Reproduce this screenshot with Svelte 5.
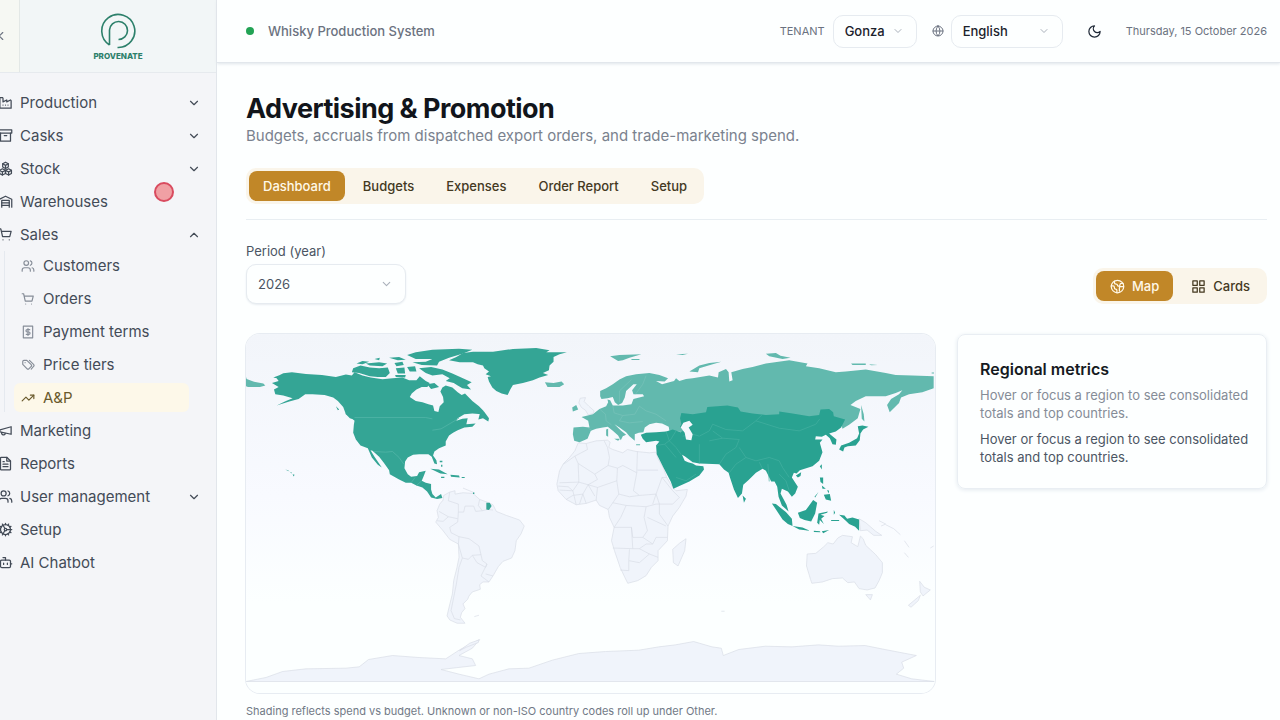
<script>
  const icons = {
    factory: ['M3 21V5l1-1h3l1 1v6l6-3v3l6-3 1 1v12Z', 'M8 16h.01M12 16h.01M16 16h.01'],
    archive: ['M2 3h20v5H2z', 'M4 8v13h16V8', 'M10 12h4'],
    boxes: [
      'M7 12.5 2.5 15v5L7 22.5l5-2.5v-5Z', 'M17 12.5 12 15v5l5 2.5 4.5-2.5v-5Z', 'M12 2 7.5 4.5v5L12 12l4.5-2.5v-5Z',
      'M7.5 4.5 12 7l4.5-2.5M12 7v5M2.5 15 7 17.500l5-2.500 5 2.500 4.500-2.500M7 17.500v5M17 17.500v5'
    ],
    warehouse: ['M2 21V8.500l10-5 10 5V21', 'M6 21V10h12v11', 'M6 14h12M6 18h12'],
    cart: ['M2 3h2.500l2.800 12.500h11.500L21 7H5.300', 'M8 20.500h.02M18 20.500h.02'],
    users: ['M2 21v-2a4 4 0 0 1 4-4h6a4 4 0 0 1 4 4v2', 'M9 3a4 4 0 1 0 0 8 4 4 0 0 0 0-8Z', 'M16 3.200a4 4 0 0 1 0 7.600M22 21v-2a4 4 0 0 0-3-3.900'],
    receipt: ['M4 2h16v20H4z', 'M15 8h-4.500a2 2 0 0 0 0 4h3a2 2 0 0 1 0 4H9M12 6v12'],
    tags: ['M3 6v5l7.500 7.500a2 2 0 0 0 3 0l4-4a2 2 0 0 0 0-3L10 4H5a2 2 0 0 0-2 2Z', 'M14.500 4l7 7a2.500 2.500 0 0 1 0 3.500L17.500 19', 'M7 8h.01'],
    trend: ['M2 17l6.500-6.500 5 5L22 7', 'M16 7h6v6'],
    megaphone: ['M3 11l18-5v12L3 14z', 'M11.600 16.800a3 3 0 1 1-5.800-1.600'],
    file: ['M14 2H5a1 1 0 0 0-1 1v18a1 1 0 0 0 1 1h14a1 1 0 0 0 1-1V8z', 'M14 2v6h6M8 9h2M8 13h8M8 17h8'],
    cog: [
      'M12 4a8 8 0 1 0 0 16 8 8 0 0 0 0-16Z', 'M12 10a2 2 0 1 0 0 4 2 2 0 0 0 0-4Z',
      'M14 12h8M12 2v2M12 20v2M11 10.300 7 3.300M11 13.700l-4 7M17 3.300l-1 1.800M17 20.700l-1-1.800M2 12h2M3.300 7l1.800 1M3.300 17l1.800-1M20.700 7l-1.800 1M20.700 17l-1.800-1'
    ],
    bot: ['M6 8h12a2 2 0 0 1 2 2v8a2 2 0 0 1-2 2H6a2 2 0 0 1-2-2v-8a2 2 0 0 1 2-2Z', 'M12 8V4H8M2 14h2M20 14h2M15 13v2M9 13v2'],
    down: ['M6 9l6 6 6-6'],
    up: ['M6 15l6-6 6 6'],
    left: ['M15 18l-6-6 6-6'],
    globe: ['M12 2a10 10 0 1 0 0 20 10 10 0 0 0 0-20Z', 'M12 2a14.500 14.500 0 0 0 0 20 14.500 14.500 0 0 0 0-20', 'M2 12h20'],
    moon: ['M12 3a6 6 0 0 0 9 9 9 9 0 1 1-9-9Z'],
    earth: ['M12 2a10 10 0 1 0 0 20 10 10 0 0 0 0-20Z', 'M21.500 12H17a2 2 0 0 0-2 2v5.500M7 3.500V5a3 3 0 0 0 3 3 2 2 0 0 1 2 2c0 2 4 2 4-1a2 2 0 0 1 2-2h3M11 21.900V18a2 2 0 0 0-2-2 2 2 0 0 1-2-2v-1a2 2 0 0 0-2-2H2'],
    grid: ['M3 3h7v7H3zM14 3h7v7h-7zM14 14h7v7h-7zM3 14h7v7H3z']
  };

  const before = [
    { label: 'Production', icon: 'factory', chevron: 'down' },
    { label: 'Casks', icon: 'archive', chevron: 'down' },
    { label: 'Stock', icon: 'boxes', chevron: 'down' },
    { label: 'Warehouses', icon: 'warehouse' },
    { label: 'Sales', icon: 'cart', chevron: 'up' }
  ];
  const sales = [
    { label: 'Customers', icon: 'users' },
    { label: 'Orders', icon: 'cart' },
    { label: 'Payment terms', icon: 'receipt' },
    { label: 'Price tiers', icon: 'tags' },
    { label: 'A&P', icon: 'trend', active: true }
  ];
  const after = [
    { label: 'Marketing', icon: 'megaphone' },
    { label: 'Reports', icon: 'file' },
    { label: 'User management', icon: 'users', chevron: 'down' },
    { label: 'Setup', icon: 'cog' },
    { label: 'AI Chatbot', icon: 'bot' }
  ];
  const tabs = ['Dashboard', 'Budgets', 'Expenses', 'Order Report', 'Setup'];
  let tab = $state('Dashboard');
  let view = $state('Map');
</script>

{#snippet icon(name, size = 15)}
  <svg class="icon" width={size} height={size} viewBox="0 0 24 24" aria-hidden="true">
    {#each icons[name] as d}<path {d} />{/each}
  </svg>
{/snippet}

{#snippet navRow(item)}
  {#if item.chevron}
    <button class="row" type="button">
      {@render icon(item.icon)}<span>{item.label}</span>{@render icon(item.chevron, 14)}
    </button>
  {:else}
    <a class="row" href="#top">{@render icon(item.icon)}<span>{item.label}</span></a>
  {/if}
{/snippet}

<div class="app">
  <aside class="sidebar">
    <div class="brand">
      <button class="back" type="button" aria-label="Collapse sidebar">{@render icon('left', 14)}</button>
      <div class="logo">
        <svg width="36" height="36" viewBox="0 0 36 36" aria-hidden="true">
          <path d="M9.500 32V17a9 9 0 1 1 9 9.500M9.500 32A16.500 16.500 0 1 1 17.500 34.500" />
        </svg>
        <span>PROVENATE</span>
      </div>
    </div>
    <nav>
      {#each before as item}{@render navRow(item)}{/each}
      <div class="sub">
        {#each sales as item}
          <a class="subrow" class:active={item.active} href="#top">{@render icon(item.icon, 14)}<span>{item.label}</span></a>
        {/each}
      </div>
      {#each after as item}{@render navRow(item)}{/each}
    </nav>
  </aside>

  <div class="page">
    <header>
      <span class="dot"></span>
      <span class="system">Whisky Production System</span>
      <label class="tenant" for="tenant">TENANT</label>
      <div class="select small tenant-box">
        <select id="tenant"><option>Gonza</option></select>{@render icon('down', 12)}
      </div>
      <label class="globe" for="language" aria-label="Language">{@render icon('globe', 12)}</label>
      <div class="select small language-box">
        <select id="language"><option>English</option></select>{@render icon('down', 12)}
      </div>
      <button class="theme" type="button" aria-label="Toggle theme">{@render icon('moon', 15)}</button>
      <time datetime="2026-10-15">Thursday, 15 October 2026</time>
    </header>

    <main id="top">
      <h1>Advertising &amp; Promotion</h1>
      <p class="lead">Budgets, accruals from dispatched export orders, and trade-marketing spend.</p>
      <div class="tabbar">
        <div class="pills">
          {#each tabs as name}
            <button type="button" class:on={tab === name} onclick={() => (tab = name)}>{name}</button>
          {/each}
        </div>
      </div>

      <div class="filters">
        <div class="period">
          <label for="period">Period (year)</label>
          <div class="select large">
            <select id="period"><option>2026</option></select>{@render icon('down', 13)}
          </div>
        </div>
        <div class="pills views">
          <button type="button" class:on={view === 'Map'} onclick={() => (view = 'Map')}>{@render icon('earth', 15)}Map</button>
          <button type="button" class:on={view === 'Cards'} onclick={() => (view = 'Cards')}>{@render icon('grid', 15)}Cards</button>
        </div>
      </div>

      <div class="board">
        <figure>
          <div class="map">
            <svg viewBox="0 0 2070 1080" role="img" aria-label="World map shaded by spend vs budget">
              <!-- Regions without spend -->
              <g class="none">
                <path d="M0 1044 60 1032 110 1014 180 1006 300 1004 340 1000 368 978 440 966 520 972 600 976 640 950 672 932 702 918 680 944 640 966 680 976 690 996 620 1004 586 1008 640 1022 700 1036 730 1022 790 1006 850 1004 920 980 1000 960 1080 954 1180 950 1240 940 1290 934 1345 924 1400 940 1428 944 1434 966 1480 948 1560 938 1640 940 1720 934 1780 938 1860 936 1920 948 2014 966 1970 986 1976 1004 1954 1022 2000 1036 2068 1044Z" />
                <g transform="translate(462 381)">
                  <path d="M132 104 150 94 166 90 166 100 190 96 220 98 240 116 262 124 280 132 290 152 320 164 360 178 374 196 364 220 350 240 346 270 336 292 310 302 296 318 280 346 268 364 250 364 240 372 242 386 218 394 208 406 204 416 190 430 196 444 186 456 182 470 196 488 172 488 150 478 142 466 148 440 158 400 162 360 172 320 178 290 176 250 150 236 130 210 108 184 116 170 112 150 120 130 130 118Z" />
                  <path class="line" d="M150 94 146 120 176 130 176 154 174 184 150 200 154 216 178 228 176 250 188 292 178 320 170 370 162 410 154 450 164 474 182 478M176 154 192 154 196 136 222 136 228 152 248 150 264 146 280 148M240 116 236 134 248 150M118 152 146 168 174 174M112 180 130 182 146 168M178 228 208 234 238 256 244 282 218 284 206 296 188 292M244 282 248 300 262 310 258 320 232 306 218 284M262 310 244 346 268 364M258 340 280 346M224 468l14-4M190 82l34 14" />
                  <path d="M860 234 856 270 836 316 822 306 820 266 840 248ZM238 538 210 548 180 570 200 560 236 546Z" />
                </g>
                <g transform="translate(702 -9)">
                  <path d="M296 336 320 338 350 330 384 328 392 334 388 350 400 356 430 366 444 356 470 362 510 366 530 364 536 384 552 412 562 440 580 470 590 480 624 476 620 496 600 530 580 556 566 586 564 630 536 660 536 690 516 710 500 735 475 750 445 758 436 740 422 710 405 660 396 630 404 590 390 560 386 536 360 524 350 508 320 518 290 522 260 506 236 480 232 460 240 420 252 398 270 380 286 360Z" />
                  <path class="line" d="M320 338 324 356 286 376 252 400M286 376 296 398 346 430 386 404 390 380 384 350 374 330M296 398 298 454 240 456M346 430 354 446 326 462 298 454M386 404 414 412 412 450 354 470 350 508M414 412 430 404 472 426 474 362M474 418 536 418M472 426 462 480 480 494 530 490 548 440 562 440M530 490 540 520 580 520 600 500 580 480 548 440M412 450 418 490 400 516 386 536M354 470 326 462 310 490 320 518M298 454 280 480 290 522M280 480 240 478M260 506 280 494 310 490M418 490 450 498 480 494M400 516 440 524 500 528 530 520 540 520M440 524 424 560 404 590M500 528 494 560 504 600 490 620 460 620 456 590 404 590M504 560 560 586M490 620 520 640 530 620 564 620M400 652 460 654 480 654 500 640 520 640M450 656 448 690 448 720 422 718M448 690 480 696 510 670 536 680M480 654 510 670M530 490 520 520M540 520 540 550 566 586M456 590 460 654M310 490 300 520M326 462 346 496M236 466l30 2 14 12" />
                  <path d="M326 252 318 238 306 230 298 216 302 202 318 200 314 212 328 226 344 240 340 248Z" />
                </g>
                <g transform="translate(1362 501)">
                  <path d="M324 160 350 158 374 138 386 126 402 130 416 112 430 104 460 108 456 126 476 138 484 106 492 114 500 134 530 162 550 186 550 216 540 240 528 262 504 268 480 264 466 244 446 246 430 232 400 234 370 244 338 248 334 236 322 196ZM500 282 520 282 514 298Z" />
                  <path d="M662 242 676 260 694 268 672 286 664 274ZM664 284 658 300 636 320 628 314ZM480 54 500 66 530 92 548 104 524 104 504 88 484 90Z" />
                  <path class="line" d="M540 60 560 70 546 76M560 72 584 84 604 102M616 120l14 20M616 156l12 14M694 142l10-6M66 332h10" />
                </g>
              </g>

              <!-- Americas -->
              <g class="americas">
                <g transform="translate(0 -9)">
                  <path d="M78 156 98 150 92 142 82 140 100 133 112 127 138 124 180 129 228 132 270 138 300 131 318 134 326 124 350 134 375 140 410 145 440 142 470 140 490 148 512 148 522 136 540 150 552 156 545 168 528 168 512 176 498 188 492 198 510 210 530 214 548 220 562 224 566 240 578 243 582 226 594 214 592 198 584 182 590 170 600 164 620 170 636 184 648 192 658 188 666 196 680 210 700 226 714 240 708 250 680 248 656 250 636 262 632 270 650 264 666 262 662 280 690 278 680 288 656 290 636 298 622 306 610 314 600 332 600 344 580 352 566 362 562 374 572 388 574 400 566 398 558 378 548 370 520 370 502 372 486 380 478 392 476 412 486 430 496 438 514 436 520 424 540 420 534 436 528 450 540 456 556 460 556 476 560 490 570 500 586 490 590 502 574 505 556 500 544 482 530 470 512 464 496 456 480 456 460 446 432 430 430 418 414 396 400 378 380 360 374 358 386 378 408 410 396 402 378 380 366 352 344 344 330 326 322 306 324 282 326 270 312 256 300 250 292 228 276 210 262 200 236 192 200 190 178 190 158 204 130 212 92 224 120 210 140 202 112 194 88 190 84 176 98 168Z" />
                  <path d="M484 72 510 64 560 56 640 53 680 56 650 68 610 80 580 92 574 104 528 102 500 94 540 92 560 84 510 84ZM520 112 556 108 590 116 620 128 660 146 678 154 664 162 676 176 650 172 636 164 624 156 600 150 612 142 590 130 560 134 540 126ZM322 112 344 104 372 110 400 112 426 110 432 126 420 138 396 138 372 136 340 126 318 124ZM332 98 350 90 370 92 350 100ZM360 98 400 94 424 98 410 106 372 104ZM386 84 402 80 400 88ZM430 80 460 78 480 86 456 88ZM446 96 470 92 474 102 452 106ZM450 112 476 110 478 128 456 128ZM484 108 508 106 512 122 492 122ZM448 132 480 132 478 140 450 138ZM544 160 566 156 580 168 556 174ZM702 250 714 240 730 262 728 272 712 262 698 266ZM270 226 280 236 276 238ZM298 248 318 256 330 268 312 262Z" />
                  <path d="M554 414 580 416 606 430 584 428ZM614 432 640 434 642 440 616 438ZM586 438h10v4h-10ZM648 439h9v3h-9ZM582 390h8v4h-8ZM586 402h4v6h-4ZM118 416l10 3v2ZM130 422l8 4v2ZM140 430l6 2-3 5ZM722 516 732 516 738 526 730 538 722 536ZM682 485h4v5h-4Z" />
                  <path class="line" d="M326 260H540L560 264M560 298 586 294 640 262M384 362 420 364 440 362 460 380 474 400M496 456 508 440M528 450 512 464" />
                </g>
                <path d="M-92 88-70 78-50 66-20 62 40 62 100 54 170 51 210 58 200 64 262 64 240 70 222 78 222 92 210 104 208 118 190 126 206 132 180 140 160 148 130 156 100 162 92 176 84 192 66 188 50 180 38 170 28 152 24 138 34 136 18 130 28 122 14 112 10 104-6 100-20 94-60 94Z" transform="translate(702 -9)" />
              </g>

              <!-- Europe and Russia -->
              <g class="europe" transform="translate(702 -9)">
                <path d="M362 196 362 180 380 172 400 160 420 146 440 136 470 130 510 126 540 132 566 142 556 152 530 150 548 160 570 154 584 150 590 142 600 150 620 144 640 142 690 134 716 140 718 124 740 114 748 124 750 152 760 148 756 124 790 114 820 108 860 98 930 88 985 98 980 106 1020 112 1070 124 1100 122 1160 116 1220 126 1250 132 1300 134 1364 136 1364 172 1330 184 1290 190 1266 200 1260 216 1232 244 1224 222 1236 204 1260 190 1270 178 1250 186 1220 196 1160 196 1130 210 1114 222 1144 234 1136 262 1110 282 1090 294 1084 270 1040 260 700 260 610 304 580 300 570 300 568 288 548 278 530 276 510 280 496 290 492 304 478 306 466 310 466 330 450 316 440 304 420 290 405 280 425 300 440 312 430 316 424 328 416 314 400 300 385 288 370 290 350 294 334 300 324 324 300 334 284 330 280 310 282 290 310 288 330 290 326 270 306 258 340 250 360 234 380 226 386 214 384 206 392 208 400 224 430 224 456 220 462 204 494 196 490 190 462 190 458 178 472 160 462 160 440 180 436 200 428 216 416 222 406 214 400 198 384 202 366 204Z" />
                <path d="M196 154 222 156 246 152 254 160 240 168 204 168ZM278 230 290 222 296 236 280 242ZM392 76 420 72 486 70 450 80 430 88 416 90ZM456 84h24v3h-24ZM590 70 626 68 610 72ZM630 122 660 104 690 96 726 92 700 100 660 112 656 124ZM860 68 890 66 904 74 934 80 910 84 870 76ZM1116 98 1160 98 1160 102 1120 102ZM1170 100 1196 102 1176 103ZM1146 222 1154 250 1156 272 1148 264ZM380 296 386 294 386 318 380 314ZM404 324 422 324 416 330ZM470 340h12v3h-12ZM1358 125h7v3h-7Z" />
                <path d="M-700 144-680 152-650 158-644 164-660 168-696 168-702 166V138Z" />
                <path class="line" d="M326 292 336 298M362 236 378 250 380 270 396 282M400 224 404 246 430 254 466 250 480 226M430 254 420 270 450 276 490 272M480 226 500 240 530 250 560 270M468 190 490 160 500 134M420 214 420 180 456 146" />
              </g>

              <!-- Asia and Middle East -->
              <g class="asia" transform="translate(702 -9)">
                <path d="M484 312 500 306 530 304 560 302 580 296 604 304 612 300 602 288 606 280 602 262 606 246 640 250 680 244 684 228 744 224 776 230 784 242 820 248 860 252 900 250 900 242 940 248 990 256 1020 252 1024 236 1050 234 1062 244 1064 256 1098 266 1086 290 1070 302 1050 308 1060 316 1072 326 1070 342 1060 340 1052 322 1040 312 1028 318 1010 316 1008 326 1030 326 1022 336 1030 364 1020 390 1000 406 962 418 952 428 944 426 938 440 956 468 948 488 938 498 926 482 908 474 904 488 922 522 928 542 908 524 898 498 894 468 886 452 876 452 860 420 850 414 830 426 808 448 792 462 788 488 776 502 764 476 752 440 748 426 734 416 720 400 660 398 640 394 616 376 608 372 616 390 626 394 640 398 650 404 672 406 674 416 660 434 630 452 600 466 582 474 574 452 552 410 532 370 530 344 540 332 530 330 500 334 490 324Z" />
                <path d="M790 494 800 504 794 516ZM950 434 966 424 964 436 956 440ZM1022 406 1028 400 1028 416ZM1086 344 1110 336 1134 322 1140 308 1136 286 1150 284 1168 288 1152 296 1144 308 1142 328 1130 344 1106 346 1096 350 1092 362 1080 356ZM1022 440 1032 440 1032 460 1024 454ZM1028 464 1040 474 1030 474ZM1034 492 1052 490 1056 510 1040 506ZM1006 498 1018 484 1008 500ZM1044 478 1050 480 1048 488ZM878 518 890 520 920 544 938 564 940 586 926 580 910 566ZM956 546 980 538 1002 508 1014 516 1008 548 996 572 976 568 962 562ZM940 586 970 590 992 600 960 596ZM1018 548 1046 542 1044 546 1024 552 1036 556 1026 564 1034 580 1022 568 1020 582 1014 576ZM1064 538 1068 546 1064 552ZM1080 552 1096 554 1104 564 1120 560 1140 566 1140 600 1128 588 1110 580 1100 570ZM1004 600 1022 602 1024 605 1004 604ZM1028 602 1050 598 1032 608ZM1056 568 1080 568 1080 571 1056 571Z" />
                <path class="line" d="M640 310 660 316 690 300 700 280 740 296 790 300 830 270 850 250M830 270 900 292 960 300 1010 280 1022 264M690 330 730 322 780 326 770 350 740 370 720 400M700 300 730 322M780 350 800 380 830 390 870 380 900 390M850 414 840 394M870 452 866 400M900 390 910 410 930 440M900 430 920 450 930 480M560 302 570 330 590 350 606 372M530 344 556 340 574 326M574 326 590 300M556 340 590 380M590 440 620 450 650 430M660 340 660 398M750 426 770 400 800 380M610 316 640 310" />
                <path class="water" d="M612 276 630 270 640 282 628 290 640 310 636 328 620 326 616 306 604 290Z" />
              </g>
            </svg>
          </div>
          <figcaption>Shading reflects spend vs budget. Unknown or non-ISO country codes roll up under Other.</figcaption>
        </figure>
        <section class="metrics">
          <h2>Regional metrics</h2>
          <p class="muted">Hover or focus a region to see consolidated totals and top countries.</p>
          <p>Hover or focus a region to see consolidated totals and top countries.</p>
        </section>
      </div>
    </main>
  </div>
  <span class="pointer"></span>
</div>

<style>
  :global(body) { margin: 0; background: #fdffff; }
  .app {
    position: relative;
    display: flex;
    height: 100vh;
    overflow: hidden;
    font-family: Inter, sans-serif;
    font-size: 13px;
    color: #4b5563;
  }
  button, select { font: inherit; color: inherit; border: 0; margin: 0; background: none; }
  .icon { flex: none; fill: none; stroke: currentColor; stroke-width: 2; stroke-linecap: round; stroke-linejoin: round; }

  .sidebar { flex: none; width: 216px; border-right: 1px solid #e2e6eb; background: #f4f5f8; overflow: hidden; }
  .brand { display: flex; height: 73px; box-sizing: border-box; border-bottom: 1px solid #e6eaee; background: #f2f6f7; }
  .back { width: 19px; padding: 0; border-right: 1px solid #e3e8e6; background: #f6f8f3; color: #6b7280; display: flex; align-items: center; box-sizing: content-box; }
  .back .icon { margin-left: -6px; }
  .logo { flex: 1; display: flex; flex-direction: column; align-items: center; padding-top: 13px; gap: 2px; color: #2d806b; }
  .logo svg { fill: none; stroke: currentColor; stroke-width: 1.6; }
  .logo span { font-size: 8px; line-height: 10px; font-weight: 800; }

  nav { display: flex; flex-direction: column; padding: 13px 0 0; margin-left: -2px; font-size: 15px; color: #434b57; }
  .row, .subrow { display: flex; align-items: center; color: inherit; text-decoration: none; text-align: left; }
  .row { height: 33px; padding: 0 15px 0 0; gap: 7px; }
  .row span { flex: 1; }
  .sub { display: flex; flex-direction: column; gap: 4px; margin: 0 27px 2px 6px; padding-left: 9px; border-left: 1px solid #e5e9ef; }
  .subrow { height: 29px; gap: 8px; padding-left: 7px; border-radius: 6px; }
  .subrow .icon { color: #868d98; }
  .subrow.active { background: #fdf8e9; color: #6a5a2c; }
  .subrow.active .icon { color: #6a5a2c; }

  .page { flex: 1; min-width: 0; }
  header { display: flex; align-items: center; height: 62px; padding: 0 13px 0 29px; border-bottom: 1px solid #e2e7ec; box-shadow: 0 1px 3px #dfe5ea; color: #6b7280; }
  .dot { width: 8px; height: 8px; border-radius: 50%; background: #22a355; margin-right: 14px; }
  .system { flex: 1; font-weight: 500; }
  .tenant { margin-right: 8px; }
  .globe { display: flex; margin: 0 7px 0 15px; }
  .select { position: relative; box-sizing: border-box; border: 1px solid #e6ebf0; border-radius: 10px; background: #fdffff; }
  .select select { width: 100%; height: 100%; padding: 0 11px; appearance: none; outline: 0; }
  .select .icon { position: absolute; right: 12px; top: 50%; translate: 0 -50%; color: #aab1bb; pointer-events: none; }
  .small { height: 33px; color: #1b222c; font-weight: 500; }
  .tenant-box { width: 84px; }
  .language-box { width: 112px; }
  .theme { display: flex; padding: 0; margin: 0 24px; color: #1f2937; }
  .tenant, time { font-size: 11px; }

  main { padding: 30px 13px 0 29px; }
  h1 { margin: 0; font-size: 27px; line-height: 31px; font-weight: 700; color: #11151b; letter-spacing: -0.02em; }
  .lead { margin: 0; font-size: 15px; line-height: 24px; color: #7a828e; }
  .tabbar { padding: 20px 0 15px; border-bottom: 1px solid #e8eef2; }
  .pills { display: inline-flex; padding: 3px; border-radius: 10px; background: #faf5ea; }
  .pills button { display: flex; align-items: center; gap: 7px; height: 30px; padding: 0 14px; border-radius: 8px; font-weight: 500; color: #44391f; }
  .pills .on { background: #c18728; color: #fff8e8; }
  .pills button + button { margin-left: 4px; }
  .tabbar .pills { display: flex; width: max-content; }

  .filters { display: flex; justify-content: space-between; align-items: flex-end; padding-top: 22px; }
  .period label { display: block; line-height: 18px; margin-bottom: 4px; }
  .large { width: 160px; height: 40px; box-shadow: 0 1px 2px #e8edf1; }

  .board { display: grid; grid-template-columns: minmax(0, 1fr) 310px; gap: 22px; align-items: start; margin-top: 30px; }
  figure { margin: 0; }
  .map { border-radius: 14px; overflow: hidden; background: linear-gradient(#f2f5fa, #f8faff 45%, #fcffff 75%); box-shadow: 0 0 0 1px #e7ecf2; }
  .map svg { display: block; width: 100%; }
  .map path { stroke-linejoin: round; }
  .map .none { fill: #f0f4fb; stroke: #d8dde5; stroke-width: 2; }
  .map .americas { fill: #34a595; stroke: none; }
  .map .europe { fill: #62b9ae; }
  .map .asia { fill: #29a291; }
  .map .line { fill: none; }
  .map .americas .line { stroke: #58b8ab; stroke-width: 2; }
  .map .asia .line { stroke: #45b0a1; stroke-width: 2; }
  .map .europe .line { stroke: #78c3ba; stroke-width: 2; }
  .map .water { fill: #f5f8fd; }
  figcaption { margin-top: 10px; font-size: 11px; line-height: 16px; color: #717986; }
  .metrics { padding: 24px 16px 22px 22px; border: 1px solid #e9eef3; border-radius: 8px; box-shadow: 0 1px 4px #e3e9ef; box-sizing: border-box; }
  h2 { margin: 0 0 7px; font-size: 16px; line-height: 20px; font-weight: 600; color: #151a22; }
  .metrics p { margin: 0; line-height: 18px; }
  .metrics .muted { color: #858c97; margin-bottom: 8px; }
  .pointer { position: absolute; left: 154px; top: 182px; width: 16px; height: 16px; border: 2px solid #d94b5f; border-radius: 50%; background: #f0a0a4; }
</style>
